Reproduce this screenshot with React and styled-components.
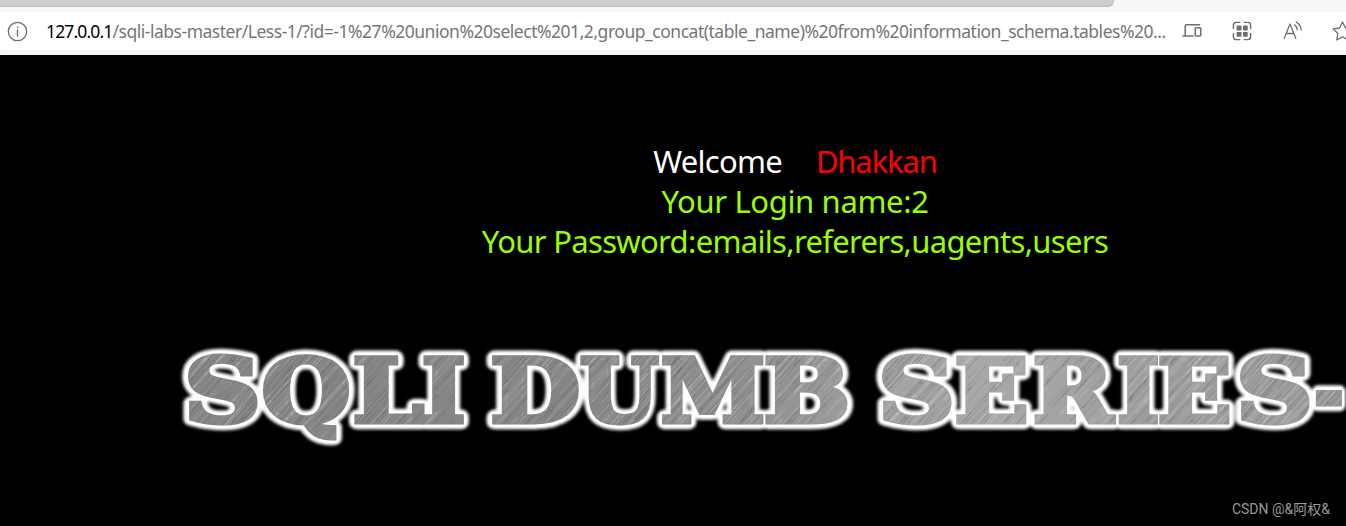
import React from "react";
import styled, { createGlobalStyle } from "styled-components";

const GlobalStyle = createGlobalStyle`
  * { box-sizing: border-box; }
  body { margin: 0; background: #000; overflow: hidden; }
`;

const Window = styled.div`
  width: 1346px;
  height: 526px;
  overflow: hidden;
  display: flex;
  flex-direction: column;
  background: #000;
`;

const TabStrip = styled.div`
  flex: none;
  height: 12px;
  background: #f7f7f7;
`;

const TabBackground = styled.div`
  width: 1114px;
  height: 7px;
  background: #cdcdcd;
  border-bottom: 1px solid #bcbcbc;
  border-right: 1px solid #bcbcbc;
  border-bottom-right-radius: 6px;
`;

const Toolbar = styled.div`
  flex: none;
  height: 43px;
  background: #f4f4f4;
  padding-bottom: 5px;
`;

const AddressBar = styled.div`
  width: 1400px;
  height: 38px;
  display: flex;
  align-items: center;
  background: #fff;
  border-bottom-left-radius: 4px;
  padding-left: 7px;
`;

const Icon = styled.svg`
  flex: none;
  width: ${(p) => p.$size || 22}px;
  height: ${(p) => p.$size || 22}px;
  margin-left: ${(p) => p.$gap || 0}px;
  fill: none;
  stroke: #6e6e6e;
  stroke-width: 1.5;
  stroke-linecap: round;
  stroke-linejoin: round;
`;

const Url = styled.div`
  flex: none;
  width: 1121px;
  margin-left: 18px;
  font: 17.5px/24px "Noto Sans", "Open Sans", sans-serif;
  letter-spacing: -0.48px;
  white-space: nowrap;
  color: #767676;
`;

const Host = styled.span`
  color: #000;
  letter-spacing: -0.85px;
`;

const Page = styled.main`
  flex: 1;
  min-height: 0;
  display: flex;
  flex-direction: column;
  background: #000;
`;

const Message = styled.section`
  margin: 86px 0 0 245px;
  width: 1100px;
  text-align: center;
`;

const Line = styled.div`
  font: 31px/40px "Noto Sans", "Open Sans", sans-serif;
  letter-spacing: ${(p) => p.$spacing || 0}px;
  color: ${(p) => p.$color};
  white-space: pre;
`;

const Name = styled.span`
  color: #ff0000;
  margin-left: 34px;
  letter-spacing: -1.15px;
`;

const Banner = styled.svg`
  flex: none;
  display: block;
  width: 1346px;
  height: 130px;
  margin-top: 64px;
`;

const Watermark = styled.footer`
  margin-top: 44px;
  padding-right: 16px;
  text-align: right;
  font: 14px/20px Roboto, "Noto Sans CJK SC", sans-serif;
  color: #9a9a9a;
  white-space: nowrap;
`;

const grain = Array.from({ length: 260 }, (_, i) => {
  const n = Math.abs(Math.sin(i * 127.1 + 11.7) * 43758.5453) % 1;
  const m = Math.abs(Math.sin(i * 311.7 + 3.1) * 24634.6345) % 1;
  return {
    x: m * 330 - 20,
    y: (i * 0.83) % 90,
    width: 40 + n * 70,
    light: i % 2 === 0,
    opacity: 0.04 + n * 0.14,
  };
});

const SIZE = 88;
const FACE = 5;

// left bearing, ink width and advance of each capital, in em
const metrics = {
  S: [0.06, 0.61, 0.722],
  Q: [0.05, 0.8, 0.87],
  L: [0.04, 0.66, 0.703],
  I: [0.04, 0.4, 0.473],
  D: [0.04, 0.79, 0.867],
  U: [0.03, 0.83, 0.85],
  M: [0.03, 1.05, 1.107],
  B: [0.04, 0.76, 0.845],
  E: [0.04, 0.71, 0.762],
  R: [0.04, 0.82, 0.832],
  "-": [0.05, 0.32, 0.415],
};

// left edge and width of every letter of the banner
const words = [
  [["S", 188, 70], ["Q", 264, 87], ["L", 354, 72], ["I", 423, 42]],
  [["D", 492, 87], ["U", 580, 82], ["M", 661, 104], ["B", 765, 83]],
  [["S", 882, 70], ["E", 956, 74], ["R", 1034, 84], ["I", 1118, 41], ["E", 1159, 74], ["S", 1240, 70], ["-", 1315, 28]],
];

function Letter({ char, left, width }) {
  const [bearing, ink, advance] = metrics[char];
  const em = (width - FACE) / ink;
  return (
    <tspan x={left + FACE / 2 - bearing * em} textLength={advance * em} lengthAdjust="spacingAndGlyphs">
      {char}
    </tspan>
  );
}

function MetalBanner() {
  return (
    <Banner viewBox="0 325 1346 130">
      <defs>
        <linearGradient id="steel" gradientUnits="userSpaceOnUse" x1="180" y1="0" x2="1346" y2="0">
          <stop offset="0" stopColor="#858585" />
          <stop offset=".2" stopColor="#868686" />
          <stop offset=".35" stopColor="#858585" />
          <stop offset=".5" stopColor="#929292" />
          <stop offset=".68" stopColor="#a9a9a9" />
          <stop offset=".82" stopColor="#9e9e9e" />
          <stop offset="1" stopColor="#999" />
        </linearGradient>
        <pattern id="grain" width="400" height="90" patternUnits="userSpaceOnUse" patternTransform="rotate(-48)">
          {grain.map((g, i) => (
            <rect key={i} x={g.x} y={g.y} width={g.width} height="1" fill={g.light ? "#fff" : "#333"} opacity={g.opacity} />
          ))}
        </pattern>
        <filter id="soft" x="-5%" y="-30%" width="110%" height="160%">
          <feGaussianBlur stdDeviation="1.8" />
        </filter>
        <filter id="edge" x="-5%" y="-30%" width="110%" height="160%">
          <feGaussianBlur stdDeviation=".7" />
        </filter>
      </defs>
      <use href="#title" fill="#fff" stroke="#fff" strokeWidth="14.5" strokeLinejoin="round" filter="url(#soft)" />
      <use href="#title" fill="#fff" stroke="#fff" strokeWidth="9.5" strokeLinejoin="round" filter="url(#edge)" />
      <g fill="url(#steel)" stroke="url(#steel)" strokeWidth={FACE} strokeLinejoin="miter" strokeMiterlimit="2">
        <g id="title" fontFamily="DejaVu Serif" fontWeight="700" fontSize={SIZE}>
          {words.map((letters, i) => (
            <text key={i} y="421.5">
              {letters.map(([char, left, width]) => (
                <Letter key={left} char={char} left={left} width={width} />
              ))}
            </text>
          ))}
        </g>
      </g>
      <use href="#title" fill="url(#grain)" stroke="url(#grain)" strokeWidth={FACE} strokeLinejoin="miter" strokeMiterlimit="2" />
    </Banner>
  );
}

export default function App() {
  return (
    <Window>
      <GlobalStyle />
      <TabStrip>
        <TabBackground />
      </TabStrip>
      <Toolbar>
        <AddressBar>
          <Icon $size={21} viewBox="0 0 21 21">
            <circle cx="10.5" cy="10.5" r="9.2" strokeWidth="1.3" />
            <path d="M10.5 9v6" strokeWidth="1.4" />
            <circle cx="10.5" cy="6.3" r=".5" fill="#6e6e6e" strokeWidth=".6" />
          </Icon>
          <Url>
            <Host>127.0.0.1</Host>
            /sqli-labs-master/Less-1/?id=-1%27%20union%20select%201,2,group_concat(table_name)%20from%20information_schema.tables%20...
          </Url>
          <Icon $gap={14} viewBox="0 0 22 22">
            <path d="M18.5 4.7H5.4Q4.2 4.7 4.2 5.9V15M2 15.9h10" />
            <rect x="14.2" y="7.8" width="5.6" height="8.2" rx="1" />
          </Icon>
          <Icon $gap={28} viewBox="0 0 22 22">
            <path d="M2.4 8.5V5.2q0-2.8 2.8-2.8h3.6M13.4 2.4h3.4q2.8 0 2.8 2.8v3.3M19.6 13.5v3.3q0 2.8-2.8 2.8h-3.4M8.8 19.6H5.2q-2.8 0-2.8-2.8v-3.3" strokeWidth="1.4" />
            <path d="M6.2 6.2h3.7v3.7H6.2zM12.6 6.2h3.5v3.7h-3.5zM6.2 12.6h3.7v3.5H6.2zM12.6 12.6h3.5v3.5h-3.5z" fill="#6e6e6e" strokeWidth="1.2" />
          </Icon>
          <Icon $gap={29} viewBox="0 0 22 22">
            <path d="M2.2 18.5 8 4l5.8 14.5M4.4 13.5h7.2M12.4 4.8q2.7 1.7 2.8 5M14.2 2q4.4 2.7 5 8" strokeWidth="1.3" />
          </Icon>
          <Icon $gap={27} viewBox="0 0 22 22">
            <path d="m11.5 2 3 6 6.3.9-4.6 4.6 1.1 6.5-5.8-3.1L5.7 20l1.1-6.5L2.2 8.9l6.3-.9z" strokeWidth="1.3" />
          </Icon>
        </AddressBar>
      </Toolbar>
      <Page>
        <Message>
          <Line $color="#fff" $spacing={-0.75}>Welcome<Name>Dhakkan</Name></Line>
          <Line $color="#99ff00" $spacing={-0.35}>Your Login name:2</Line>
          <Line $color="#99ff00" $spacing={-0.68}>Your Password:emails,referers,uagents,users</Line>
        </Message>
        <MetalBanner />
        <Watermark>CSDN @&amp;阿权&amp;</Watermark>
      </Page>
    </Window>
  );
}
